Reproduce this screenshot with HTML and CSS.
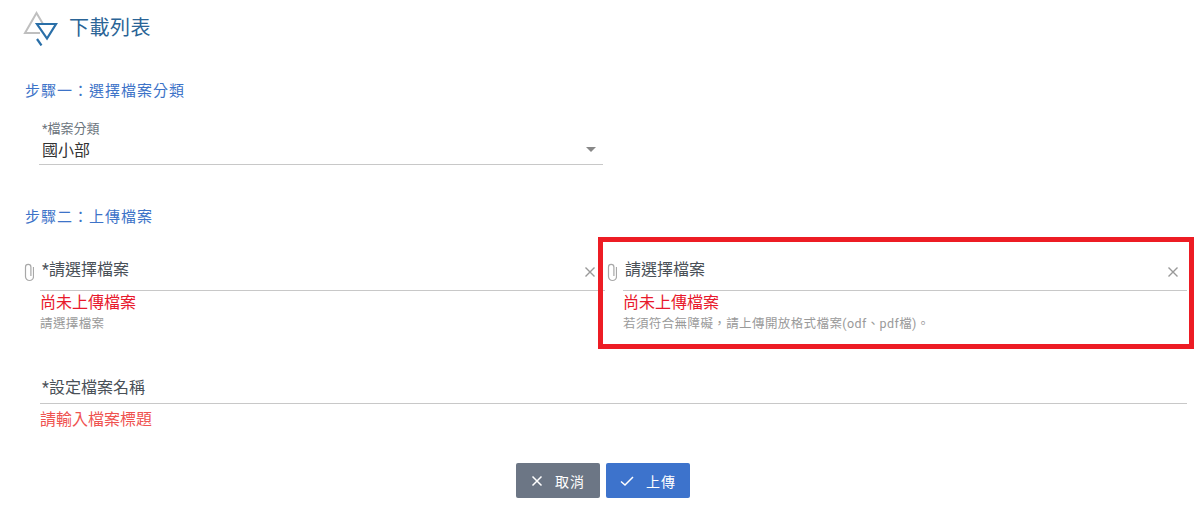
FILE: index.html
```html
<!DOCTYPE html>
<html lang="zh-Hant">
<head>
    <meta charset="UTF-8">
    <title>下載列表</title>
    <link rel="stylesheet" href="styles.css">
</head>
<body>
    <header class="page-head">
        <svg class="logo" width="35" height="36" viewBox="0 0 35 36">
            <path d="M17 23 H2 L13.5 3 L20 14" fill="none" stroke="#bfbfbf" stroke-width="2"/>
            <path d="M14 14 H33 L24 28.5 Z" fill="none" stroke="#2a6fa8" stroke-width="2.2"/>
            <path d="M14 29 L18.5 35.5" fill="none" stroke="#2a6fa8" stroke-width="2.2"/>
        </svg>
        <h1>下載列表</h1>
    </header>

    <h2 class="step step-one">步驟一：選擇檔案分類</h2>
    <div class="select-field">
        <div class="small-label">*檔案分類</div>
        <div class="select-value">國小部<span class="caret"></span></div>
    </div>

    <h2 class="step step-two">步驟二：上傳檔案</h2>
    <div class="upload-row">
        <div class="upload">
            <svg class="clip" width="12" height="19" viewBox="-1 0 12 19">
                <path d="M10.5 4 V13.5 A4 4 0 0 1 2.5 13.5 V4 A2.7 2.7 0 0 1 7.9 4 V13" fill="none" stroke="#a8a8a8" stroke-width="1.2"/>
            </svg>
            <div class="upload-body">
                <div class="upload-input">
                    <span>*請選擇檔案</span>
                    <svg class="clear" width="10" height="10" viewBox="0 0 10 10"><path d="M0.5 0.5 L9.5 9.5 M9.5 0.5 L0.5 9.5" stroke="#999" stroke-width="1.4"/></svg>
                </div>
                <div class="error">尚未上傳檔案</div>
                <div class="hint">請選擇檔案</div>
            </div>
        </div>
        <div class="upload">
            <svg class="clip" width="12" height="19" viewBox="-1 0 12 19">
                <path d="M10.5 4 V13.5 A4 4 0 0 1 2.5 13.5 V4 A2.7 2.7 0 0 1 7.9 4 V13" fill="none" stroke="#a8a8a8" stroke-width="1.2"/>
            </svg>
            <div class="upload-body">
                <div class="upload-input">
                    <span>請選擇檔案</span>
                    <svg class="clear" width="10" height="10" viewBox="0 0 10 10"><path d="M0.5 0.5 L9.5 9.5 M9.5 0.5 L0.5 9.5" stroke="#999" stroke-width="1.4"/></svg>
                </div>
                <div class="error">尚未上傳檔案</div>
                <div class="hint">若須符合無障礙，請上傳開放格式檔案(odf、pdf檔)。</div>
            </div>
        </div>
        <div class="highlight"></div>
    </div>

    <div class="name-field">
        <div class="name-input">*設定檔案名稱</div>
        <div class="name-error">請輸入檔案標題</div>
    </div>

    <div class="actions">
        <button class="btn btn-cancel">
            <svg width="12" height="12" viewBox="0 0 12 12"><path d="M1.5 1.5 L10.5 10.5 M10.5 1.5 L1.5 10.5" stroke="#fff" stroke-width="1.5"/></svg>
            取消
        </button>
        <button class="btn btn-upload">
            <svg width="14" height="12" viewBox="0 0 14 12"><path d="M1 6.5 L5 10 L13 2" fill="none" stroke="#fff" stroke-width="1.5"/></svg>
            上傳
        </button>
    </div>
</body>
</html>
```

FILE: styles.css
```css
* {
    box-sizing: border-box;
}
body {
    margin: 0;
    font-family: Roboto, "Noto Sans CJK TC", sans-serif;
    color: #495057;
    background: #fff;
}
.page-head {
    display: flex;
    align-items: center;
    gap: 11px;
    height: 46px;
    padding: 10px 0 0 23px;
}
.logo {
    flex: none;
}
h1 {
    margin: 0;
    font-size: 20px;
    font-weight: 400;
    line-height: 36px;
    letter-spacing: 0.5px;
    color: #2a6496;
}
.step {
    margin: 0;
    padding-left: 25px;
    font-size: 15px;
    font-weight: 400;
    line-height: 22px;
    letter-spacing: 1px;
    color: #3d73c8;
}
.step-one {
    margin-top: 34px;
}
.step-two {
    margin-top: 41px;
}
.select-field {
    width: 564px;
    margin: 20px 0 0 39px;
}
.small-label {
    padding-left: 3px;
    font-size: 13px;
    line-height: 14px;
    color: #6c757d;
}
.select-value {
    display: flex;
    align-items: center;
    justify-content: space-between;
    height: 29px;
    padding: 0 7px 2px 3px;
    border-bottom: 1px solid #c8c8c8;
    font-size: 16px;
    color: #333;
}
.caret {
    width: 0;
    height: 0;
    border-left: 5px solid transparent;
    border-right: 5px solid transparent;
    border-top: 5px solid #888;
}
.upload-row {
    position: relative;
    display: grid;
    grid-template-columns: 583px 1fr;
    margin: 18px 16px 0 22px;
}
.upload {
    display: flex;
    gap: 6px;
}
.clip {
    flex: none;
    margin-top: 17px;
}
.upload-body {
    flex: 1;
    min-width: 0;
}
.upload-input {
    display: flex;
    justify-content: space-between;
    align-items: center;
    height: 45px;
    padding: 0 9px 1px 2px;
    border-bottom: 1px solid #c8c8c8;
    font-size: 16px;
    color: #495057;
}
.upload:first-child .upload-input {
    padding-right: 10px;
}
.clear {
    margin-top: 9px;
}
.error {
    margin-top: 2px;
    font-size: 16px;
    line-height: 20px;
    color: #e8192c;
}
.hint {
    margin-top: 1px;
    font-size: 12.5px;
    line-height: 20px;
    letter-spacing: 0.4px;
    color: #9a9a9a;
}
.highlight {
    position: absolute;
    left: 576px;
    top: -9px;
    width: 596px;
    height: 112px;
    border: 5px solid #ed1c24;
}
.name-field {
    margin: 36px 16px 0 40px;
}
.name-input {
    height: 34px;
    padding: 4px 0 0 2px;
    border-bottom: 1px solid #c8c8c8;
    font-size: 16px;
    color: #495057;
}
.name-error {
    margin-top: 6px;
    font-size: 16px;
    line-height: 20px;
    color: #ef5350;
}
.actions {
    display: flex;
    justify-content: center;
    gap: 6px;
    margin: 33px 0 0 3px;
}
.btn {
    display: flex;
    align-items: center;
    justify-content: center;
    gap: 12px;
    width: 84px;
    height: 35px;
    border: none;
    border-radius: 2px;
    font-family: inherit;
    font-size: 14px;
    letter-spacing: 1px;
    color: #fff;
}
.btn-cancel {
    background: #6c7685;
}
.btn-upload {
    background: #3d73cc;
}
```
